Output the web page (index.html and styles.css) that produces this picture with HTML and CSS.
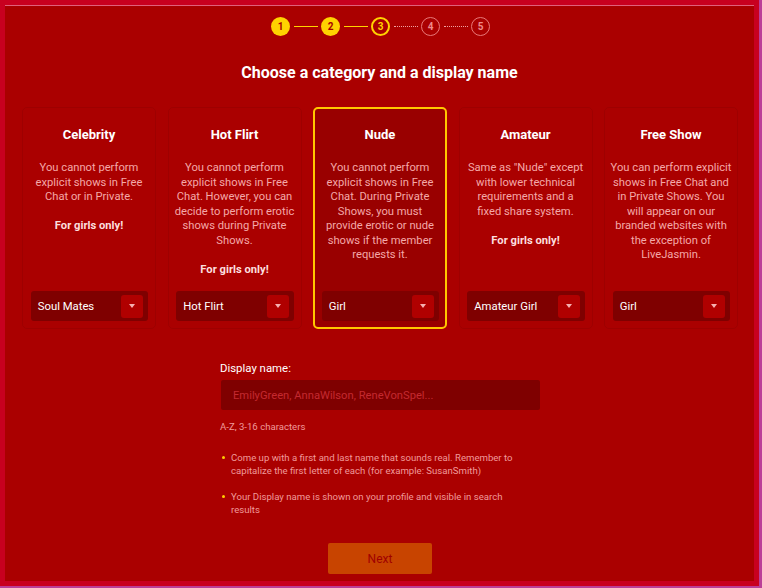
FILE: index.html
```html
<!DOCTYPE html>
<html lang="en">
<head>
<meta charset="utf-8">
<title>Choose a category</title>
<link rel="stylesheet" href="styles.css">
</head>
<body>
<div class="frame">
  <div class="panel">
    <div class="steps">
      <span class="step done">1</span>
      <span class="line solid"></span>
      <span class="step done">2</span>
      <span class="line solid"></span>
      <span class="step current">3</span>
      <span class="line dotted"></span>
      <span class="step todo">4</span>
      <span class="line dotted"></span>
      <span class="step todo">5</span>
    </div>
    <h1 class="title">Choose a category and a display name</h1>
    <div class="cards">
      <div class="card">
        <h2 class="card-title">Celebrity</h2>
        <p class="desc">You cannot perform explicit shows in Free Chat or in Private.</p>
        <p class="note">For girls only!</p>
        <div class="select"><span>Soul Mates</span><span class="arrow"></span></div>
      </div>
      <div class="card">
        <h2 class="card-title">Hot Flirt</h2>
        <p class="desc">You cannot perform explicit shows in Free Chat. However, you can decide to perform erotic shows during Private Shows.</p>
        <p class="note">For girls only!</p>
        <div class="select"><span>Hot Flirt</span><span class="arrow"></span></div>
      </div>
      <div class="card selected">
        <h2 class="card-title">Nude</h2>
        <p class="desc">You cannot perform explicit shows in Free Chat. During Private Shows, you must provide erotic or nude shows if the member requests it.</p>
        <div class="select"><span>Girl</span><span class="arrow"></span></div>
      </div>
      <div class="card">
        <h2 class="card-title">Amateur</h2>
        <p class="desc">Same as "Nude" except with lower technical requirements and a fixed share system.</p>
        <p class="note">For girls only!</p>
        <div class="select"><span>Amateur Girl</span><span class="arrow"></span></div>
      </div>
      <div class="card">
        <h2 class="card-title">Free Show</h2>
        <p class="desc">You can perform explicit shows in Free Chat and in Private Shows. You will appear on our branded websites with the exception of LiveJasmin.</p>
        <div class="select"><span>Girl</span><span class="arrow"></span></div>
      </div>
    </div>
    <div class="form">
      <label class="label" for="dn">Display name:</label>
      <input class="input" id="dn" type="text" placeholder="EmilyGreen, AnnaWilson, ReneVonSpel...">
      <div class="hint">A-Z, 3-16 characters</div>
      <ul class="tips">
        <li>Come up with a first and last name that sounds real. Remember to capitalize the first letter of each (for example: SusanSmith)</li>
        <li>Your Display name is shown on your profile and visible in search results</li>
      </ul>
      <div class="actions"><button class="next" type="button">Next</button></div>
    </div>
  </div>
</div>
</body>
</html>
```
FILE: styles.css
```css
html {
  background: #bb3f98;
}
body {
  margin: 0;
  font-family: Roboto, "Liberation Sans", Arial, sans-serif;
}
.frame {
  width: 759px;
  height: 586px;
  box-sizing: border-box;
  padding: 5px;
  background: #c8001f;
}
.panel {
  height: 100%;
  box-sizing: border-box;
  background: #aa0000;
  border-top: 1px solid #e0607c;
  padding-top: 11px;
}
.steps {
  display: flex;
  justify-content: center;
  align-items: center;
  padding-left: 2px;
}
.step {
  width: 19px;
  height: 19px;
  box-sizing: border-box;
  border-radius: 50%;
  display: flex;
  align-items: center;
  justify-content: center;
  font-size: 10px;
  font-weight: 700;
}
.step.done {
  background: #ffd200;
  color: #a80000;
}
.step.current {
  border: 2px solid #ffd200;
  color: #ffd200;
}
.step.todo {
  border: 1px solid #e87878;
  color: #ee8a8a;
}
.line {
  width: 24px;
  margin: 0 3.5px;
}
.line.solid {
  border-top: 1.5px solid #ffd200;
}
.line.dotted {
  border-top: 1.5px dotted #f0a0a0;
}
.title {
  margin: 27px 0 0;
  text-align: center;
  color: #ffffff;
  font-size: 16px;
  line-height: 19px;
  font-weight: 700;
}
.cards {
  margin-top: 25px;
  display: flex;
  justify-content: center;
  gap: 11.5px;
  padding-left: 1px;
}
.card {
  width: 134px;
  height: 222px;
  box-sizing: border-box;
  border: 1px solid rgba(0, 0, 0, 0.07);
  border-radius: 5px;
  padding: 19px 4.75px 7px 4.75px;
  display: flex;
  flex-direction: column;
  text-align: center;
}
.card.selected {
  background: #990000;
  border: 2px solid #ffc800;
  padding: 18px 3.75px 6px 3.75px;
}
.card-title {
  margin: 0;
  color: #ffffff;
  font-size: 13px;
  line-height: 16px;
  font-weight: 700;
}
.desc {
  margin: 18px 0 0;
  color: #f4a8a8;
  font-size: 11.2px;
  line-height: 14.5px;
}
.note {
  margin: 14.5px 0 0;
  color: #fcdede;
  font-size: 11.2px;
  line-height: 14.5px;
  font-weight: 700;
}
.select {
  margin: auto 2px 0 3px;
  height: 30px;
  box-sizing: border-box;
  background: #7f0000;
  border-radius: 3px;
  display: flex;
  align-items: center;
  justify-content: space-between;
  padding: 0 5px 0 7px;
  color: #ffffff;
  font-size: 11.3px;
  text-align: left;
}
.arrow {
  width: 22px;
  height: 23px;
  border-radius: 3px;
  background: #b00000;
  display: flex;
  align-items: center;
  justify-content: center;
}
.arrow::after {
  content: "";
  width: 0;
  height: 0;
  border-left: 3.5px solid transparent;
  border-right: 3.5px solid transparent;
  border-top: 4px solid #f6b0b0;
}
.form {
  width: 320px;
  margin: 32px auto 0;
  padding-left: 1px;
}
.label {
  display: block;
  color: #ffffff;
  font-size: 11.4px;
  line-height: 14px;
}
.input {
  display: block;
  margin-top: 5px;
  margin-left: 1px;
  width: 319px;
  height: 30px;
  box-sizing: border-box;
  border: none;
  border-radius: 2px;
  background: #7f0000;
  padding: 0 12px;
  font-family: inherit;
  font-size: 11.2px;
  color: #ffffff;
  outline: none;
}
.input::placeholder {
  color: #c42a30;
}
.hint {
  margin-top: 11px;
  color: #f09a9a;
  font-size: 9.6px;
  line-height: 12px;
}
.tips {
  list-style: none;
  margin: 17.5px 0 0;
  padding: 0 22px 0 11px;
  display: flex;
  flex-direction: column;
  gap: 13px;
}
.tips li {
  position: relative;
  color: #f09a9a;
  font-size: 9.6px;
  line-height: 13px;
}
.tips li::before {
  content: "";
  position: absolute;
  left: -9px;
  top: 5px;
  width: 3px;
  height: 3px;
  border-radius: 50%;
  background: #ffcc00;
}
.actions {
  display: flex;
  justify-content: center;
  margin-top: 27.5px;
}
.next {
  width: 104px;
  height: 31px;
  border: none;
  border-radius: 2px;
  background: #c84400;
  color: #a00000;
  font-family: inherit;
  font-size: 12px;
}
```
